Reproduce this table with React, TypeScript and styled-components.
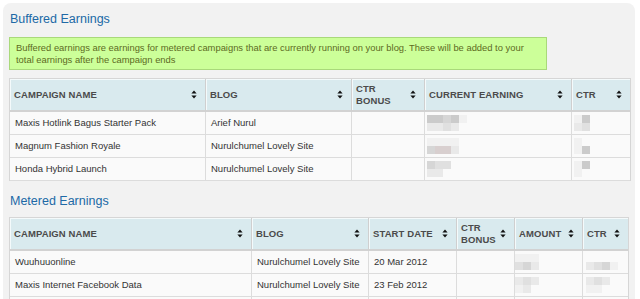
import React from "react";
import styled, { createGlobalStyle } from "styled-components";

const Global = createGlobalStyle`
  html, body { margin: 0; padding: 0; background: #ffffff; }
  body { font-family: "Liberation Sans", Arial, sans-serif; overflow: hidden; }
`;

const Panel = styled.div`
  margin: 3px 5px 0 3px;
  width: 620px;
  min-height: 300px;
  padding: 6px 6px 0 6px;
  background: #f2f2f2;
  border-radius: 8px 8px 0 0;
`;

const Title = styled.h2<{ $gap?: number }>`
  margin: ${(p) => p.$gap ?? 0}px 0 0 1px;
  font-size: 12.5px;
  line-height: 16px;
  font-weight: normal;
  color: #2069a6;
  height: 16px;
`;

const Notice = styled.div`
  margin-top: 10px;
  width: 525px;
  padding: 4px 5px 3px 6px;
  background: #ccff99;
  border: 1px solid #a9d97a;
  color: #5d6b1f;
  font-size: 9.4px;
  line-height: 12px;
  white-space: nowrap;
`;

const Table = styled.table<{ $gap: number }>`
  margin-top: ${(p) => p.$gap}px;
  width: 620px;
  table-layout: fixed;
  border-collapse: separate;
  border-spacing: 0;
  border: 1px solid #d6d6d6;
  border-bottom: none;
  background: #fafafa;
`;

const Th = styled.th`
  height: 31px;
  padding: 0 8px 0 4px;
  background: #d9eaee;
  border-right: 1px solid #cfcfcf;
  border-bottom: 2px solid #d2d2d2;
  box-shadow: inset 1px 1px 0 #f4fafb;
  text-align: left;
  vertical-align: middle;
  &:last-child { border-right: none; }
`;

const HeadInner = styled.div`
  display: flex;
  align-items: center;
  justify-content: space-between;
  gap: 4px;
`;

const HeadLabel = styled.span`
  font-size: 9.5px;
  line-height: 12px;
  font-weight: bold;
  color: #4b4b4b;
  letter-spacing: 0.1px;
`;

const Td = styled.td`
  height: 22px;
  padding: 0 5px;
  border-right: 1px solid #dcdcdc;
  border-bottom: 1px solid #dcdcdc;
  font-size: 9.5px;
  line-height: 12px;
  color: #333333;
  white-space: nowrap;
  overflow: hidden;
  vertical-align: middle;
  &:last-child { border-right: none; }
`;

const BlurTd = styled(Td)`
  padding: 0;
  overflow: visible;
  position: relative;
`;

const PixelGrid = styled.div<{ $cols: number; $x: number; $y: number }>`
  position: absolute;
  left: ${(p) => p.$x}px;
  top: ${(p) => p.$y}px;
  display: grid;
  grid-template-columns: repeat(${(p) => p.$cols}, 8px);
  grid-auto-rows: 8px;
`;

const Pixel = styled.span<{ $c: string }>`
  background: ${(p) => p.$c};
`;

const shades: Record<string, string> = {
  a: "#cbcbcb",
  b: "#d6d6d6",
  c: "#e0e0e0",
  d: "#e9e9e9",
  e: "#f1f1f1",
  p: "#d8cfcf",
  ".": "transparent",
};

function Pixels({ rows, x = 2, y = 2 }: { rows: string[]; x?: number; y?: number }) {
  const cols = Math.max(...rows.map((r) => r.length), 1);
  return (
    <PixelGrid $cols={cols} $x={x} $y={y}>
      {rows.flatMap((r, i) =>
        r.padEnd(cols, ".").split("").map((ch, j) => <Pixel key={`${i}-${j}`} $c={shades[ch]} />)
      )}
    </PixelGrid>
  );
}

const SortIcon = () => (
  <svg width="6" height="9" viewBox="0 0 6 9" aria-hidden>
    <path d="M3 0.5 L5.6 3.6 L0.4 3.6 Z" fill="#111" />
    <path d="M3 8.5 L5.6 5.4 L0.4 5.4 Z" fill="#111" />
  </svg>
);

type Col = { label: React.ReactNode; width: number };

function Head({ cols }: { cols: Col[] }) {
  return (
    <>
      <colgroup>
        {cols.map((c, i) => (
          <col key={i} style={{ width: c.width }} />
        ))}
      </colgroup>
      <thead>
        <tr>
          {cols.map((c, i) => (
            <Th key={i}>
              <HeadInner>
                <HeadLabel>{c.label}</HeadLabel>
                <SortIcon />
              </HeadInner>
            </Th>
          ))}
        </tr>
      </thead>
    </>
  );
}

const cols1: Col[] = [
  { label: "CAMPAIGN NAME", width: 196 },
  { label: "BLOG", width: 146 },
  { label: <>CTR<br />BONUS</>, width: 73 },
  { label: "CURRENT EARNING", width: 147 },
  { label: "CTR", width: 58 },
];

const cols2: Col[] = [
  { label: "CAMPAIGN NAME", width: 242 },
  { label: "BLOG", width: 117 },
  { label: "START DATE", width: 88 },
  { label: <>CTR<br />BONUS</>, width: 58 },
  { label: "AMOUNT", width: 68 },
  { label: "CTR", width: 45 },
];

const buffered = [
  { name: "Maxis Hotlink Bagus Starter Pack", blog: "Arief Nurul", earn: ["aabae", "ddcd"], ctr: ["ea", "dc"] },
  { name: "Magnum Fashion Royale", blog: "Nurulchumel Lovely Site", earn: ["eeee", "bppd"], ctr: ["e", "ea"] },
  { name: "Honda Hybrid Launch", blog: "Nurulchumel Lovely Site", earn: ["bcc", "dd"], ctr: ["ea", "e"] },
];

const metered = [
  { name: "Wuuhuuonline", blog: "Nurulchumel Lovely Site", date: "20 Mar 2012", amt: ["eee", "cbd"], ctr: ["", "dcbe"] },
  { name: "Maxis Internet Facebook Data", blog: "Nurulchumel Lovely Site", date: "23 Feb 2012", amt: ["dcd", "ed"], ctr: ["dcd", "ee"] },
  { name: "", blog: "", date: "", amt: [""], ctr: [""] },
];

export default function App() {
  return (
    <>
      <Global />
      <Panel>
        <Title $gap={2}>Buffered Earnings</Title>
        <Notice>
          Buffered earnings are earnings for metered campaigns that are currently running on your blog. These will be added to your
          <br />
          total earnings after the campaign ends
        </Notice>
        <Table $gap={8}>
          <Head cols={cols1} />
          <tbody>
            {buffered.map((r, i) => (
              <tr key={i}>
                <Td>{r.name}</Td>
                <Td>{r.blog}</Td>
                <Td />
                <BlurTd>
                  <Pixels rows={r.earn} x={2} y={3} />
                </BlurTd>
                <BlurTd>
                  <Pixels rows={r.ctr} x={2} y={3} />
                </BlurTd>
              </tr>
            ))}
          </tbody>
        </Table>
        <Title $gap={12}>Metered Earnings</Title>
        <Table $gap={8}>
          <Head cols={cols2} />
          <tbody>
            {metered.map((r, i) => (
              <tr key={i}>
                <Td>{r.name}</Td>
                <Td>{r.blog}</Td>
                <Td>{r.date}</Td>
                <Td />
                <BlurTd>
                  <Pixels rows={r.amt} x={0} y={3} />
                </BlurTd>
                <BlurTd>
                  <Pixels rows={r.ctr} x={3} y={3} />
                </BlurTd>
              </tr>
            ))}
          </tbody>
        </Table>
      </Panel>
    </>
  );
}
